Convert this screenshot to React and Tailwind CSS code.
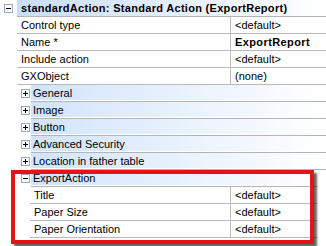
import React from 'react';

const rowText = 'text-[11px] leading-[16px] text-black';

function Box({ open }) {
  return (
    <span className="relative block w-[9px] h-[9px] border border-[#98a9c0] bg-white">
      <span className="absolute left-[1px] top-[3px] w-[5px] h-[1px] bg-black" />
      {!open && <span className="absolute left-[3px] top-[1px] w-[1px] h-[5px] bg-black" />}
    </span>
  );
}

function Prop({ name, value, bold, indent }) {
  return (
    <div className="flex h-[17px]">
      <div className={indent ? 'w-[30px]' : 'w-[17px]'} />
      <div className="flex flex-1 border-b border-[#b9b9b9]">
        <div className={`${indent ? 'w-[200px]' : 'w-[213px]'} pl-[4px] ${rowText}`}>{name}</div>
        <div className={`flex-1 border-l border-[#b9b9b9] pl-[4px] ${rowText} ${bold ? 'font-bold tracking-[0.4px]' : ''}`}>{value}</div>
      </div>
    </div>
  );
}

function Group({ label, open }) {
  return (
    <div className="flex h-[17px]">
      <div className="w-[17px]" />
      <div className="w-[14px] flex items-center justify-start pl-[4px]">
        <Box open={open} />
      </div>
      <div className="flex-1 border-b border-[#b4b4b4]">
        <div className={`h-[15px] bg-gradient-to-r from-[#d1e4fc] to-white pl-[2px] ${rowText} leading-[15px]`}>{label}</div>
      </div>
    </div>
  );
}

export default function App() {
  const groups = ['General', 'Image', 'Button', 'Advanced Security', 'Location in father table'];
  return (
    <div className="relative w-[326px] h-[246px] bg-white overflow-hidden" style={{ fontFamily: '"Liberation Sans", Arial, sans-serif' }}>
      <div className="flex h-[17px]">
        <div className="w-[17px] flex items-center pl-[4px]">
          <Box open />
        </div>
        <div className="flex-1 border-b border-[#b4b4b4]">
          <div className={`h-[16px] bg-gradient-to-r from-[#c9def9] to-white pl-[4px] ${rowText} font-bold tracking-[0.3px]`}>
            standardAction: Standard Action (ExportReport)
          </div>
        </div>
      </div>
      <Prop name="Control type" value="<default>" />
      <Prop name="Name *" value="ExportReport" bold />
      <Prop name="Include action" value="<default>" />
      <Prop name="GXObject" value="(none)" />
      {groups.map(g => <Group key={g} label={g} />)}
      <Group label="ExportAction" open />
      <Prop name="Title" value="<default>" indent />
      <Prop name="Paper Size" value="<default>" indent />
      <Prop name="Paper Orientation" value="<default>" indent />

      <div className="absolute left-[317px] top-[170px] right-0 bottom-0 bg-white" />
      <div className="absolute left-[11px] top-[170px] w-[303px] h-[74px] border-4 border-[#e8111b] shadow-[3px_3px_2px_rgba(0,0,0,0.6)]" />
    </div>
  );
}
